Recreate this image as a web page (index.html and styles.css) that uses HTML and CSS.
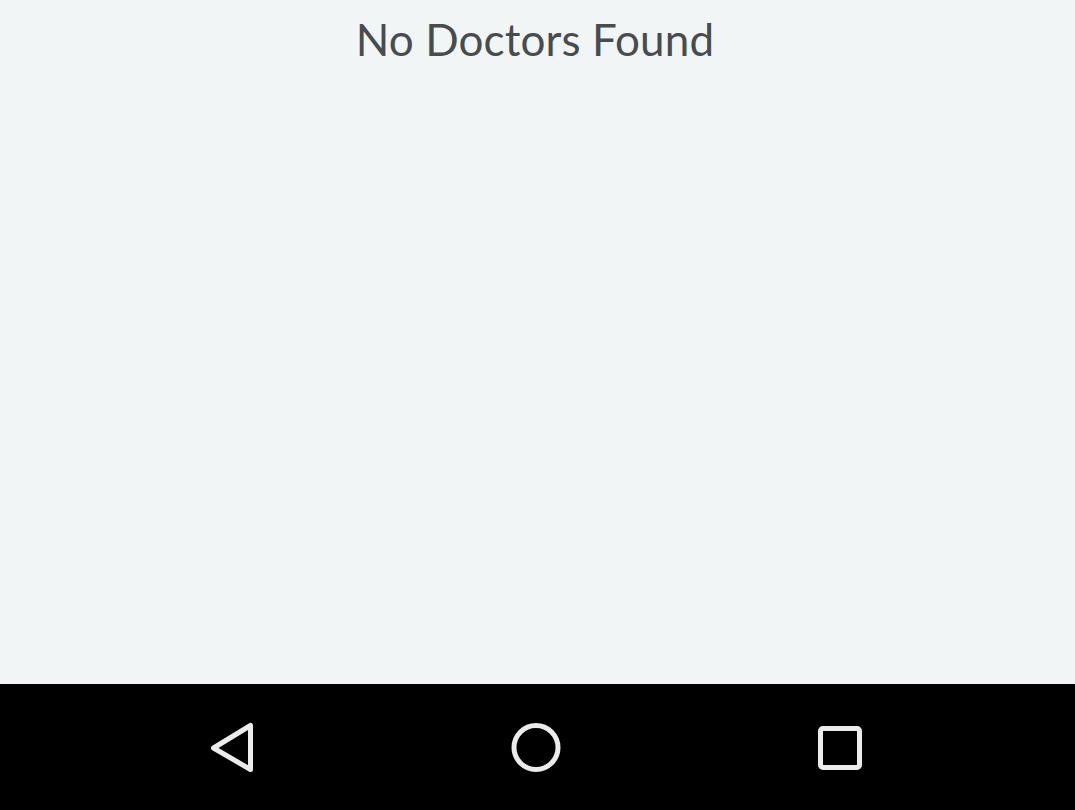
FILE: index.html
```html
<!DOCTYPE html>
<html>
<head>
<meta charset="utf-8">
<link rel="stylesheet" href="styles.css">
</head>
<body>
<div class="screen">
  <main class="content">
    <h1 class="empty-title">No Doctors Found</h1>
  </main>
  <nav class="navbar">
    <svg class="nav-icon" width="60" height="60" viewBox="0 0 60 60">
      <polygon points="48.5,8.5 48.5,52.5 11.5,31" fill="none" stroke="#ececec" stroke-width="5" stroke-linejoin="round"/>
    </svg>
    <svg class="nav-icon" width="60" height="60" viewBox="0 0 60 60">
      <circle cx="30" cy="30.5" r="22" fill="none" stroke="#ececec" stroke-width="5"/>
    </svg>
    <svg class="nav-icon" width="60" height="60" viewBox="0 0 60 60">
      <rect x="10.5" y="11.5" width="39" height="39" rx="2.5" fill="none" stroke="#ececec" stroke-width="5"/>
    </svg>
  </nav>
</div>
</body>
</html>
```
FILE: styles.css
```css
html, body {
  margin: 0;
  padding: 0;
}
body {
  width: 1075px;
  height: 810px;
  overflow: hidden;
  background: #f1f5f6;
}
.screen {
  display: flex;
  flex-direction: column;
  height: 810px;
}
.content {
  flex: 1;
  background: #f1f5f6;
  display: flex;
  justify-content: center;
  padding-right: 5px;
}
.empty-title {
  margin: 13px 0 0 0;
  font-family: "Lato", "Open Sans", sans-serif;
  font-weight: 400;
  font-size: 44px;
  line-height: 52px;
  color: #474c4e;
  letter-spacing: 0.1px;
}
.navbar {
  height: 126px;
  background: #000;
  display: grid;
  grid-template-columns: 60px 60px 60px;
  justify-content: center;
  column-gap: 244px;
  align-items: center;
  padding-right: 4px;
}
.nav-icon {
  display: block;
}
```
